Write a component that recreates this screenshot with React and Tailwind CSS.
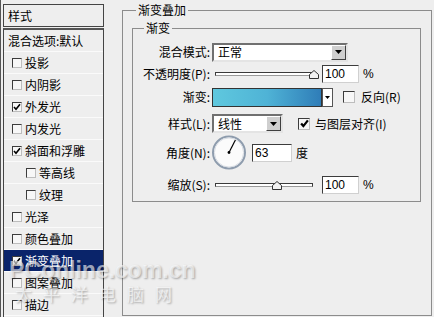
import React from "react";

const Check = ({ w = 8, sw = 1.6 }) => (
  <svg width={w} height={w} viewBox="0 0 8 8">
    <path d="M1 4 L3 6.3 L7 1.2" fill="none" stroke="#000" strokeWidth={sw} />
  </svg>
);

const Cb = ({ checked }) => (
  <span className="w-[10px] h-[10px] shrink-0 border border-[#3c3c3c] border-r-[#bdbdbd] border-b-[#bdbdbd] bg-[#f7f7f7] flex items-center justify-center">
    {checked && <Check />}
  </span>
);

const Row = ({ text, checked, sub, selected, plain }) => (
  <div
    className={
      "h-[22px] flex items-center border-b border-[#fafafa] " +
      (selected ? "bg-[#0a246a] text-white " : "") +
      (plain ? "pl-[4px]" : sub ? "pl-[22px]" : "pl-[8px]")
    }
  >
    {!plain && (
      <span className="mr-[3px] flex">
        <Cb checked={checked} />
      </span>
    )}
    <span className="leading-[14px]">{text}</span>
  </div>
);

const Arrow = () => (
  <svg width="7" height="4" viewBox="0 0 7 4">
    <path d="M0 0 H7 L3.5 4 Z" fill="#000" />
  </svg>
);

const Select = ({ w, text }) => (
  <div
    className="h-[19px] border-2 border-[#707070] border-r-[#e4e4e4] border-b-[#e4e4e4] bg-white flex items-center justify-between"
    style={{ width: w }}
  >
    <span className="pl-[4px] leading-[14px]">{text}</span>
    <span className="w-[15px] h-[15px] bg-[#cfcfcf] border border-white border-r-[#404040] border-b-[#404040] flex items-center justify-center">
      <Arrow />
    </span>
  </div>
);

const Label = ({ children }) => (
  <div className="w-[77px] shrink-0 text-right leading-[14px]">{children}</div>
);

const Input = ({ w, text }) => (
  <div
    className="h-[18px] bg-white border border-[#3c3c3c] border-r-[#d0d0d0] border-b-[#d0d0d0] flex items-center pl-[2px] font-['Liberation_Sans',sans-serif] text-[12px]"
    style={{ width: w }}
  >
    {text}
  </div>
);

const Slider = ({ pos }) => (
  <div className="relative w-[110px] h-[16px] flex items-center">
    <div className="ml-[3px] w-[98px] h-[4px] bg-white border border-[#3a3a3a] border-b-[#9a9a9a]" />
    <svg
      className="absolute top-[4px]"
      style={{ left: pos - 4.5 }}
      width="10"
      height="9"
      viewBox="0 0 10 9"
    >
      <path d="M5 0.5 L9.5 4.5 L9.5 8.5 L0.5 8.5 L0.5 4.5 Z" fill="#f2f2f2" stroke="#333" />
    </svg>
  </div>
);

export default function App() {
  const rows = [
    { text: "投影" },
    { text: "内阴影" },
    { text: "外发光", checked: true },
    { text: "内发光" },
    { text: "斜面和浮雕", checked: true },
    { text: "等高线", sub: true },
    { text: "纹理", sub: true },
    { text: "光泽" },
    { text: "颜色叠加" },
    { text: "渐变叠加", checked: true, selected: true },
    { text: "图案叠加" },
    { text: "描边" },
  ];
  return (
    <div className="relative w-[434px] h-[317px] overflow-hidden bg-[#eeeeee] flex text-[12px] text-black font-['Noto_Sans_CJK_SC','Liberation_Sans',sans-serif]">
      {/* left list */}
      <div className="w-[106px] h-full shrink-0 border-l border-[#555] pl-[2px] pt-[4px]">
        <div className="w-[101px] h-[23px] border border-[#444] flex items-center pl-[4px]">
          <span className="leading-[14px]">样式</span>
        </div>
        <div className="mt-[1px] w-[101px] h-[300px] border-t-2 border-l border-r border-[#444] border-t-[#555] pt-0">
          <Row text="混合选项:默认" plain />
          {rows.map((r) => (
            <Row key={r.text} {...r} />
          ))}
        </div>
      </div>

      {/* right panel */}
      <div className="flex-1 pl-[16px] pt-[10px]">
        <div className="relative w-[310px] h-[306px] border border-[#8c8c8c] pl-[9px] pt-[17px]">
          <div className="absolute left-[13px] -top-[8px] px-[2px] bg-[#eeeeee] leading-[14px]">渐变叠加</div>

          <div className="relative w-[289px] h-[174px] border border-[#8c8c8c] pt-[13px]">
            <div className="absolute left-[11px] -top-[8px] px-[2px] bg-[#eeeeee] leading-[14px]">渐变</div>

            <div className="flex items-center h-[20px]">
              <Label>混合模式:</Label>
              <div className="ml-[2px]">
                <Select w={136} text="正常" />
              </div>
            </div>

            <div className="flex items-center h-[18px] mt-[3px]">
              <Label>不透明度(P):</Label>
              <div className="ml-[2px]">
                <Slider pos={101} />
              </div>
              <Input w={37} text="100" />
              <span className="ml-[4px] font-['Liberation_Sans',sans-serif]">%</span>
            </div>

            <div className="flex items-center h-[20px] mt-[4px]">
              <Label>渐变:</Label>
              <div className="ml-[2px] flex h-[19px]">
                <div className="w-[110px] h-full border border-[#333] bg-[linear-gradient(to_right,#5fc8de,#4fb3d6_50%,#2f7db8)]" />
                <div className="w-[11px] h-full bg-white border border-[#555] flex items-center justify-center">
                  <svg width="5" height="3" viewBox="0 0 5 3">
                    <path d="M0 0 H5 L2.5 3 Z" fill="#000" />
                  </svg>
                </div>
              </div>
              <span className="ml-[10px] flex">
                <span className="w-[12px] h-[12px] border border-[#3c3c3c] border-r-[#bdbdbd] border-b-[#bdbdbd] bg-[#f7f7f7]" />
              </span>
              <span className="ml-[6px] leading-[14px]">反向(R)</span>
            </div>

            <div className="flex items-center h-[19px] mt-[7px]">
              <Label>样式(L):</Label>
              <div className="ml-[2px]">
                <Select w={71} text="线性" />
              </div>
              <span className="ml-[15px] w-[12px] h-[12px] border border-[#3c3c3c] border-r-[#bdbdbd] border-b-[#bdbdbd] bg-[#f7f7f7] flex items-center justify-center">
                <Check w={9} sw={2} />
              </span>
              <span className="ml-[5px] leading-[14px]">与图层对齐(I)</span>
            </div>

            <div className="flex items-center h-[35px] mt-[2px]">
              <Label>角度(N):</Label>
              <svg className="ml-[1px]" width="36" height="35" viewBox="0 0 36 35">
                <circle cx="18" cy="17.5" r="16" fill="#fbfbfb" stroke="#8e9cad" strokeWidth="2" />
                <circle cx="18" cy="17.5" r="14.6" fill="none" stroke="#d6dbe2" strokeWidth="1" />
                <line x1="18" y1="17.5" x2="24.4" y2="5" stroke="#000" strokeWidth="1.2" />
                <circle cx="18" cy="17.5" r="1.4" fill="#000" />
              </svg>
              <div className="ml-[5px]">
                <Input w={40} text="63" />
              </div>
              <span className="ml-[4px] leading-[14px]">度</span>
            </div>

            <div className="flex items-center h-[18px] mt-[6px]">
              <Label>缩放(S):</Label>
              <div className="ml-[2px]">
                <Slider pos={64} />
              </div>
              <Input w={37} text="100" />
              <span className="ml-[4px] font-['Liberation_Sans',sans-serif]">%</span>
            </div>
          </div>
        </div>
      </div>

      {/* watermark */}
      <div className="absolute left-[9px] top-[258px] text-white/60 [text-shadow:1px_1px_2px_rgba(0,0,0,0.3)] pointer-events-none">
        <div className="font-['Liberation_Sans',sans-serif] text-[23px] leading-[24px] font-bold">PConline.com.cn</div>
        <div className="mt-[2px] ml-[6px] text-[17px] leading-[20px] tracking-[11px]">太平洋电脑网</div>
      </div>
    </div>
  );
}
